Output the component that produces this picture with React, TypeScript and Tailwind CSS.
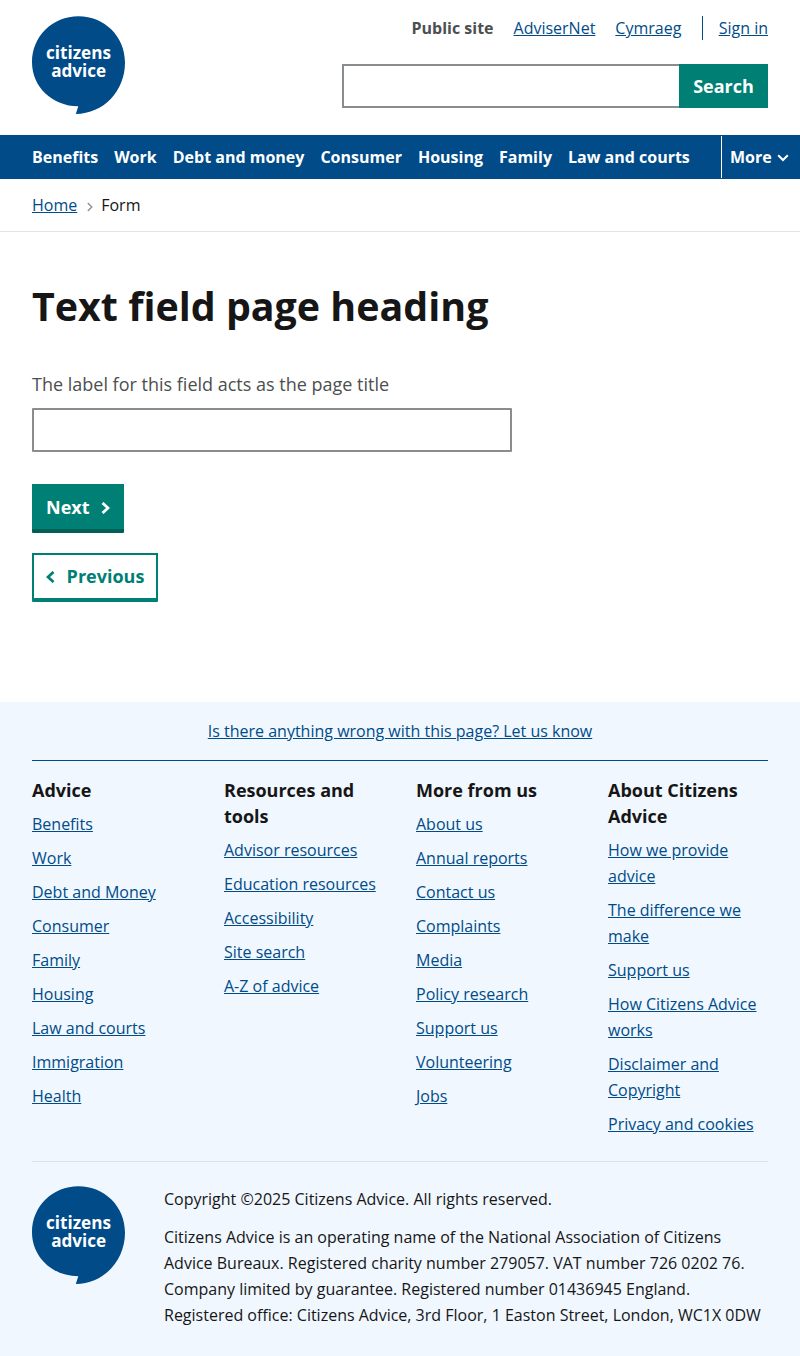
const columns: { title: string; links: string[] }[] = [
  {
    title: "Advice",
    links: ["Benefits", "Work", "Debt and Money", "Consumer", "Family", "Housing", "Law and courts", "Immigration", "Health"],
  },
  {
    title: "Resources and tools",
    links: ["Advisor resources", "Education resources", "Accessibility", "Site search", "A-Z of advice"],
  },
  {
    title: "More from us",
    links: ["About us", "Annual reports", "Contact us", "Complaints", "Media", "Policy research", "Support us", "Volunteering", "Jobs"],
  },
  {
    title: "About Citizens Advice",
    links: [
      "How we provide advice",
      "The difference we make",
      "Support us",
      "How Citizens Advice works",
      "Disclaimer and Copyright",
      "Privacy and cookies",
    ],
  },
];

const navItems = ["Benefits", "Work", "Debt and money", "Consumer", "Housing", "Family", "Law and courts"];

function Logo() {
  return (
    <svg viewBox="0 0 93 98" className="h-[98px] w-[93px] shrink-0" role="img" aria-label="Citizens Advice">
      <path
        d="M46.5 0.3C72.5 0.3 93 20.5 93 46.5C93 75 71.5 97.9 43.8 97.9L46.3 90.2C20.5 90.2 0 71 0 46.2C0 20.5 20.5 0.3 46.5 0.3Z"
        fill="#004b88"
      />
      <g fill="#fff" fontSize="18.6" fontWeight="700">
        <text x="14" y="43.3" textLength="65" lengthAdjust="spacingAndGlyphs">citizens</text>
        <text x="19.2" y="61.4" textLength="55" lengthAdjust="spacingAndGlyphs">advice</text>
      </g>
    </svg>
  );
}

function Link({ children }: { children: string }) {
  return (
    <a href="#" className="text-[#004b88] underline">
      {children}
    </a>
  );
}

export default function App() {
  return (
    <div className="min-h-[1356px] bg-white font-['Open_Sans',sans-serif] text-base leading-[26px] text-[#161616] antialiased">
      <header className="flex h-[135px] justify-between px-8 pt-4">
        <Logo />
        <div className="flex w-[426px] flex-col">
          <div className="flex h-6 items-center justify-end">
            <span className="mr-5 font-bold text-[#4c4f50]">Public site</span>
            <span className="mr-5"><Link>AdviserNet</Link></span>
            <Link>Cymraeg</Link>
            <span className="ml-[20.3px] h-6 border-l border-[#004b88] pl-4 leading-6"><Link>Sign in</Link></span>
          </div>
          <form className="mt-6 flex h-11">
            <input aria-label="Search" className="min-w-0 flex-1 border-2 border-r-0 border-[#8a8d90] outline-none" />
            <button type="button" className="w-[89px] bg-[#008074] text-lg font-bold text-white">Search</button>
          </form>
        </div>
      </header>

      <nav className="flex h-11 items-center justify-between bg-[#004b88] pl-8 font-bold text-white">
        <div className="flex gap-4">
          {navItems.map((item) => (
            <a key={item} href="#">{item}</a>
          ))}
        </div>
        <button type="button" className="flex h-[42px] w-[79px] items-center border-l border-white pl-2">
          More
          <svg viewBox="0 0 12 8" className="mt-0.5 ml-[5px] h-2 w-3" fill="none" stroke="currentColor" strokeWidth="2">
            <path d="M1.2 1.2L6 6L10.8 1.2" />
          </svg>
        </button>
      </nav>

      <div className="flex h-[53px] items-center border-b border-[#e3e4e5] px-8">
        <Link>Home</Link>
        <svg viewBox="0 0 6 10" className="mt-[3px] mr-2 ml-[10px] h-[10px] w-[6px]" fill="none" stroke="#8a8d90" strokeWidth="1.3">
          <path d="M0.8 1L4.8 5L0.8 9" />
        </svg>
        <span>Form</span>
      </div>

      <main className="flex h-[470px] flex-col items-start px-8 pt-12">
        <h1 className="text-[39.4px] leading-[52px] font-bold">Text field page heading</h1>
        <label htmlFor="field" className="mt-[39px] text-lg leading-[26px] text-[#4c4f50]">
          The label for this field acts as the page title
        </label>
        <input id="field" className="mt-[11px] h-11 w-[480px] rounded-[1px] border-2 border-[#8a8d90] outline-none" />
        <button
          type="button"
          className="mt-8 flex h-[49px] w-[92px] items-center rounded-b-[1px] border-b-4 border-[#005f56] bg-[#008074] pt-px pl-[14px] text-lg font-bold text-white"
        >
          <span>Next</span>
          <svg viewBox="0 0 9 12" className="mt-px ml-[11px] h-3 w-[9px]" fill="none" stroke="currentColor" strokeWidth="2.7">
            <path d="M1.5 0.9L7 6L1.5 11.1" />
          </svg>
        </button>
        <button
          type="button"
          className="mt-5 flex h-[49px] w-[126px] items-center rounded-b-[1px] border-2 border-b-4 border-[#008074] pb-0.5 pl-3 text-lg font-bold text-[#008074]"
        >
          <svg viewBox="0 0 9 12" className="mt-[2px] mr-[11.6px] h-3 w-[9px] shrink-0" fill="none" stroke="currentColor" strokeWidth="2.7">
            <path d="M7.5 0.9L2 6L7.5 11.1" />
          </svg>
          <span>Previous</span>
        </button>
      </main>

      <footer className="h-[654px] bg-[#f0f7ff] px-8 pt-4">
        <div className="flex h-[42px] justify-center text-center">
          <Link>Is there anything wrong with this page? Let us know</Link>
        </div>
        <div className="grid h-[401px] grid-cols-4 gap-8 border-t border-[#004b88] pt-4">
          {columns.map((column) => (
            <section key={column.title}>
              <h2 className="text-lg leading-[26px] font-bold">{column.title}</h2>
              <ul>
                {column.links.map((link) => (
                  <li key={link} className="mt-2"><Link>{link}</Link></li>
                ))}
              </ul>
            </section>
          ))}
        </div>
        <div className="flex gap-[39px] border-t border-[#dbe1e8] pt-6">
          <Logo />
          <div>
            <p>Copyright ©2025 Citizens Advice. All rights reserved.</p>
            <p className="mt-3">
              Citizens Advice is an operating name of the National Association of Citizens Advice Bureaux. Registered
              charity number 279057. VAT number 726 0202 76. Company limited by guarantee. Registered number 01436945
              England. Registered office: Citizens Advice, 3rd Floor, 1 Easton Street, London, WC1X 0DW
            </p>
          </div>
        </div>
      </footer>
    </div>
  );
}
